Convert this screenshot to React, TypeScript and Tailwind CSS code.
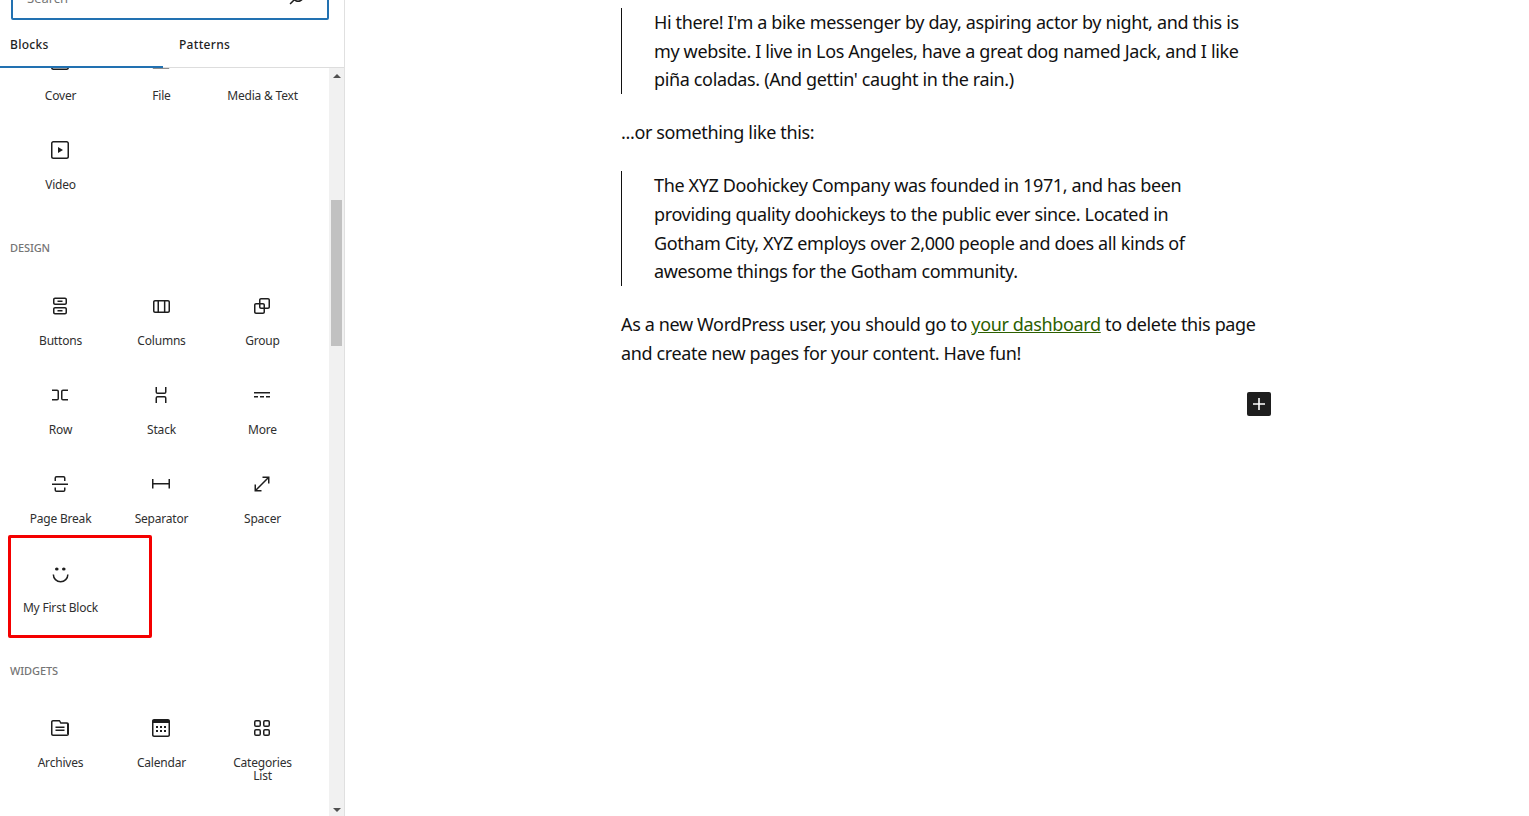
const ICONS: Record<string, string> = {
  cover: 'M18.7 3H5.3C4 3 3 4 3 5.3v13.4C3 20 4 21 5.3 21h13.4c1.3 0 2.3-1 2.3-2.3V5.3C21 4 20 3 18.7 3zm.8 15.7c0 .4-.4.8-.8.8H5.3c-.4 0-.8-.4-.8-.8V5.3c0-.4.4-.8.8-.8h13.4c.4 0 .8.4.8.8v13.4z',
  file: 'M12.848 8a1 1 0 0 1-.914-.594l-.723-1.63a.5.5 0 0 0-.447-.276H5a.5.5 0 0 0-.5.5v11.5a.5.5 0 0 0 .5.5h14a.5.5 0 0 0 .5-.5v-9A.5.5 0 0 0 19 8h-6.152Zm.612-1.5a.5.5 0 0 1-.462-.31l-.445-1.084A2 2 0 0 0 10.763 4H5a2 2 0 0 0-2 2v11.5a2 2 0 0 0 2 2h14a2 2 0 0 0 2-2v-9a2 2 0 0 0-2-2h-5.54Z',
  media: 'M13 17h8v-1.5h-8V17zM3 7v5.5h8V7H3zm10 4h8V9.5h-8V11zm0-4.5V8h8V6.5h-8zM3 14.5V16h8v-1.5H3zm0 3V19h8v-1.5H3z',
  video: 'M18.7 3H5.3C4 3 3 4 3 5.3v13.4C3 20 4 21 5.3 21h13.4c1.3 0 2.3-1 2.3-2.3V5.3C21 4 20 3 18.7 3zm.8 15.7c0 .4-.4.8-.8.8H5.3c-.4 0-.8-.4-.8-.8V5.3c0-.4.4-.8.8-.8h13.4c.4 0 .8.4.8.8v13.4zM10 15l5-3-5-3v6z',
  buttons: 'M14.5 17.5H9.5V16H14.5V17.5Z M14.5 8H9.5V6.5H14.5V8Z M7 3.5H17C18.1046 3.5 19 4.39543 19 5.5V9C19 10.1046 18.1046 11 17 11H7C5.89543 11 5 10.1046 5 9V5.5C5 4.39543 5.89543 3.5 7 3.5ZM17 5H7C6.72386 5 6.5 5.22386 6.5 5.5V9C6.5 9.27614 6.72386 9.5 7 9.5H17C17.2761 9.5 17.5 9.27614 17.5 9V5.5C17.5 5.22386 17.2761 5 17 5Z M7 13H17C18.1046 13 19 13.8954 19 15V18.5C19 19.6046 18.1046 20.5 17 20.5H7C5.89543 20.5 5 19.6046 5 18.5V15C5 13.8954 5.89543 13 7 13ZM17 14.5H7C6.72386 14.5 6.5 14.7239 6.5 15V18.5C6.5 18.7761 6.72386 19 7 19H17C17.2761 19 17.5 18.7761 17.5 18.5V15C17.5 14.7239 17.2761 14.5 17 14.5Z',
  columns: 'M19 6H6c-1.1 0-2 .9-2 2v9c0 1.1.9 2 2 2h13c1.1 0 2-.9 2-2V8c0-1.1-.9-2-2-2zm-4.1 1.5v10H10v-10h4.9zM5.5 17V8c0-.3.2-.5.5-.5h2.5v10H6c-.3 0-.5-.2-.5-.5zm14 0c0 .3-.2.5-.5.5h-2.6v-10H19c.3 0 .5.2.5.5v9z',
  group: 'M18 4h-7c-1.1 0-2 .9-2 2v3H6c-1.1 0-2 .9-2 2v7c0 1.1.9 2 2 2h7c1.1 0 2-.9 2-2v-3h3c1.1 0 2-.9 2-2V6c0-1.1-.9-2-2-2zm-4.5 14c0 .3-.2.5-.5.5H6c-.3 0-.5-.2-.5-.5v-7c0-.3.2-.5.5-.5h3V13c0 1.1.9 2 2 2h2.5v3zm0-4.5H11c-.3 0-.5-.2-.5-.5v-2.5H13c.3 0 .5.2.5.5v2.5zm5-.5c0 .3-.2.5-.5.5h-3V11c0-1.1-.9-2-2-2h-2.5V6c0-.3.2-.5.5-.5h7c.3 0 .5.2.5.5v7z',
  row: 'M4 6.5h5a2 2 0 0 1 2 2v7a2 2 0 0 1-2 2H4V16h5a.5.5 0 0 0 .5-.5v-7A.5.5 0 0 0 9 8H4V6.5Zm16 0h-5a2 2 0 0 0-2 2v7a2 2 0 0 0 2 2h5V16h-5a.5.5 0 0 1-.5-.5v-7A.5.5 0 0 1 15 8h5V6.5Z',
  stack: 'M17.5 4v5a2 2 0 0 1-2 2h-7a2 2 0 0 1-2-2V4H8v5a.5.5 0 0 0 .5.5h7A.5.5 0 0 0 16 9V4h1.5Zm0 16v-5a2 2 0 0 0-2-2h-7a2 2 0 0 0-2 2v5H8v-5a.5.5 0 0 1 .5-.5h7a.5.5 0 0 1 .5.5v5h1.5Z',
  more: 'M4 9v1.5h16V9H4zm12 5.5h4V13h-4v1.5zm-6 0h4V13h-4v1.5zm-6 0h4V13H4v1.5z',
  pageBreak: 'M17.5 9V6a2 2 0 0 0-2-2h-7a2 2 0 0 0-2 2v3H8V6a.5.5 0 0 1 .5-.5h7a.5.5 0 0 1 .5.5v3h1.5Zm0 6.5V18a2 2 0 0 1-2 2h-7a2 2 0 0 1-2-2v-2.5H8V18a.5.5 0 0 0 .5.5h7a.5.5 0 0 0 .5-.5v-2.5h1.5ZM4 13h16v-1.5H4V13Z',
  separator: 'M4.5 12.5v4H3V7h1.5v3.987h15V7H21v9.5h-1.5v-4h-15Z',
  spacer: 'M12.5 4.5H19.5V11.5H18V7.06L7.06 18H11.5V19.5H4.5V12.5H6V16.94L16.94 6H12.5V4.5Z',
  smile: 'M4.6 13.5a8 8 0 0 0 16 0h-1.5a6.5 6.5 0 0 1-13 0h-1.5ZM7 8a1.8 1.5 0 1 0 3.6 0a1.8 1.5 0 1 0-3.6 0ZM14 8a1.8 1.5 0 1 0 3.6 0a1.8 1.5 0 1 0-3.6 0Z',
  archive: 'M19 6.2h-5.9l-.6-1.1C12.3 4.5 11.8 4 11 4H5c-1.1 0-2 .9-2 2v12c0 1.1.9 2 2 2h14c1.1 0 2-.9 2-2V8.2c0-1.1-.9-2-2-2zm.5 11.8c0 .3-.2.5-.5.5H5c-.3 0-.5-.2-.5-.5V6c0-.3.2-.5.5-.5h6c.1 0 .3.1.3.2l1.1 2h6.1c.3 0 .5.2.5.5V18zM7.5 15h9v-1.5h-9V15zm0-3h9v-1.5h-9V12z',
  calendar: 'M19 3H5c-1.1 0-2 .9-2 2v14c0 1.1.9 2 2 2h14c1.1 0 2-.9 2-2V5c0-1.1-.9-2-2-2zm.5 16c0 .3-.2.5-.5.5H5c-.3 0-.5-.2-.5-.5V7h15v12zM9 10H7v2h2v-2zm0 4H7v2h2v-2zm4-4h-2v2h2v-2zm4 0h-2v2h2v-2zm-4 4h-2v2h2v-2zm4 0h-2v2h2v-2z',
  category: 'M6 5.5h3a.5.5 0 01.5.5v3a.5.5 0 01-.5.5H6a.5.5 0 01-.5-.5V6a.5.5 0 01.5-.5zM4 6a2 2 0 012-2h3a2 2 0 012 2v3a2 2 0 01-2 2H6a2 2 0 01-2-2V6zm11-.5h3a.5.5 0 01.5.5v3a.5.5 0 01-.5.5h-3a.5.5 0 01-.5-.5V6a.5.5 0 01.5-.5zM13 6a2 2 0 012-2h3a2 2 0 012 2v3a2 2 0 01-2 2h-3a2 2 0 01-2-2V6zm5 8.5h-3a.5.5 0 00-.5.5v3a.5.5 0 00.5.5h3a.5.5 0 00.5-.5v-3a.5.5 0 00-.5-.5zM15 13a2 2 0 00-2 2v3a2 2 0 002 2h3a2 2 0 002-2v-3a2 2 0 00-2-2h-3zm-9 1.5h3a.5.5 0 01.5.5v3a.5.5 0 01-.5.5H6a.5.5 0 01-.5-.5v-3a.5.5 0 01.5-.5zM4 15a2 2 0 012-2h3a2 2 0 012 2v3a2 2 0 01-2 2H6a2 2 0 01-2-2v-3z',
}

function BlockIcon({ name }: { name: string }) {
  return (
    <svg viewBox="0 0 24 24" className="w-6 h-6 -ml-px fill-[#1e1e1e]">
      <path fillRule="evenodd" d={ICONS[name]} />
    </svg>
  )
}

function BlockItem({ icon, label }: { icon: string; label: string }) {
  return (
    <div className="h-[89px] flex flex-col items-center pt-4 text-[12px] leading-[13px] tracking-[-0.2px] text-[#2f2f2f] text-center">
      <BlockIcon name={icon} />
      <span className="mt-[16px] w-[78px]">{label}</span>
    </div>
  )
}

function SectionTitle({ children, className }: { children: string; className: string }) {
  return (
    <h2 className={`pl-[10px] h-4 text-[11px] leading-4 font-medium tracking-[-0.1px] uppercase text-[#757575] ${className}`}>{children}</h2>
  )
}

export default function App() {
  return (
    <div className="flex h-[816px] w-[1529px] overflow-hidden bg-white font-['Noto_Sans',sans-serif]">
      {/* Inserter sidebar */}
      <aside className="relative w-[345px] shrink-0 flex flex-col border-r border-[#e0e0e0]">
        <div className="h-[20px] shrink-0 pl-[11px] pr-[15px] flex flex-col justify-end">
          <div className="h-[48px] shrink-0 flex items-end justify-between border-2 border-[#2271b1] rounded-[2px] pl-[14px] pr-[18px] pb-[12px] text-[13px] leading-[16px] text-[#757575]">
            <span>Search</span>
            <svg viewBox="0 0 24 24" className="w-6 h-6 fill-[#1e1e1e] -mb-[3px]">
              <path d="M13 5c-3.3 0-6 2.7-6 6 0 1.4.5 2.7 1.3 3.7l-3.8 3.8 1.1 1.1 3.8-3.8c1 .8 2.3 1.3 3.7 1.3 3.3 0 6-2.7 6-6S16.3 5 13 5zm0 10.5c-2.5 0-4.5-2-4.5-4.5s2-4.5 4.5-4.5 4.5 2 4.5 4.5-2 4.5-4.5 4.5z" />
            </svg>
          </div>
        </div>

        {/* Tabs */}
        <div className="h-[48px] shrink-0 flex border-b border-[#dddddd] text-[12px] font-medium tracking-[0.3px] text-[#1e1e1e]">
          <div className="w-[163px] h-[48px] border-b-[2px] border-[#2271b1] pl-[10px] pt-[16px] leading-[17px]">Blocks</div>
          <div className="pl-4 pt-[16px] leading-[17px]">Patterns</div>
        </div>

        <div className="flex-1 min-h-0 flex">
          <div className="w-[329px] shrink-0 overflow-hidden">
            <div className="-mt-[35px] pl-[10px] w-[313px]">
              <div className="grid grid-cols-3">
                <BlockItem icon="cover" label="Cover" />
                <BlockItem icon="file" label="File" />
                <BlockItem icon="media" label="Media & Text" />
                <BlockItem icon="video" label="Video" />
              </div>
            </div>
            <SectionTitle className="mt-[29px] mb-[22px]">Design</SectionTitle>
            <div className="pl-[10px] w-[313px] grid grid-cols-3">
              <BlockItem icon="buttons" label="Buttons" />
              <BlockItem icon="columns" label="Columns" />
              <BlockItem icon="group" label="Group" />
              <BlockItem icon="row" label="Row" />
              <BlockItem icon="stack" label="Stack" />
              <BlockItem icon="more" label="More" />
              <BlockItem icon="pageBreak" label="Page Break" />
              <BlockItem icon="separator" label="Separator" />
              <BlockItem icon="spacer" label="Spacer" />
              <BlockItem icon="smile" label="My First Block" />
            </div>
            <SectionTitle className="mt-[29px] mb-[21px]">Widgets</SectionTitle>
            <div className="pl-[10px] w-[313px] grid grid-cols-3">
              <BlockItem icon="archive" label="Archives" />
              <BlockItem icon="calendar" label="Calendar" />
              <BlockItem icon="category" label="Categories List" />
            </div>
          </div>

          {/* Scrollbar */}
          <div className="w-[15px] shrink-0 bg-[#f1f1f1] flex flex-col items-center">
            <div className="mt-[6px] w-0 h-0 border-x-[4px] border-x-transparent border-b-[4px] border-b-[#505050]" />
            <div className="mt-[122px] w-[11px] h-[146px] bg-[#c1c1c1]" />
            <div className="mt-auto mb-[4px] w-0 h-0 border-x-[4px] border-x-transparent border-t-[4px] border-t-[#505050]" />
          </div>
        </div>

        {/* Red annotation round the custom block */}
        <div className="absolute left-[8px] top-[535px] w-[144px] h-[103px] border-[3px] border-[#f40000] rounded-[2px]" />
      </aside>

      {/* Editor canvas */}
      <main className="flex-1 pl-[276px] pt-[7.8px] text-[18px] leading-[28.8px] tracking-[-0.36px] text-[#111111]">
        <div className="w-[650px]">
          <blockquote className="border-l border-[#111111] pl-[32px] whitespace-nowrap">
            Hi there! I'm a bike messenger by day, aspiring actor by night, and this is<br />
            my website. I live in Los Angeles, have a great dog named Jack, and I like<br />
            piña coladas. (And gettin' caught in the rain.)
          </blockquote>
          <p className="mt-6">...or something like this:</p>
          <blockquote className="mt-6 border-l border-[#111111] pl-[32px] whitespace-nowrap">
            The XYZ Doohickey Company was founded in 1971, and has been<br />
            providing quality doohickeys to the public ever since. Located in<br />
            Gotham City, XYZ employs over 2,000 people and does all kinds of<br />
            awesome things for the Gotham community.
          </blockquote>
          <p className="mt-6 whitespace-nowrap">
            As a new WordPress user, you should go to <a className="text-[#2c5f00] underline">your dashboard</a> to delete this page<br />
            and create new pages for your content. Have fun!
          </p>
          <div className="mt-6 flex justify-end">
            <button className="w-6 h-6 rounded-[2px] bg-[#1e1e1e] flex items-center justify-center">
              <svg viewBox="0 0 24 24" className="w-6 h-6 fill-white">
                <path d="M18 11.2h-5.2V6h-1.6v5.2H6v1.6h5.2V18h1.6v-5.2H18z" />
              </svg>
            </button>
          </div>
        </div>
      </main>
    </div>
  )
}
